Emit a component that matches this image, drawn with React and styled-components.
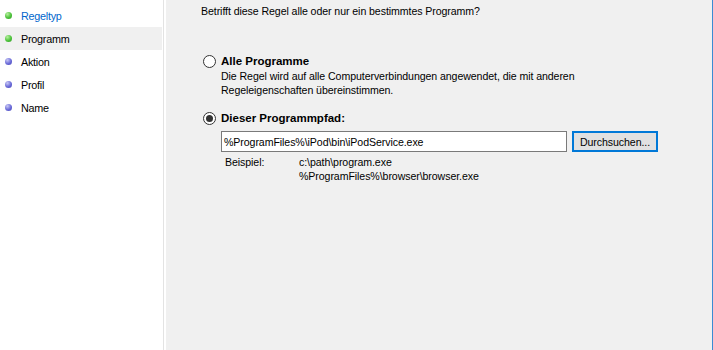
import React from "react";
import styled, { createGlobalStyle, css } from "styled-components";

const Global = createGlobalStyle`
  html, body { margin: 0; padding: 0; background: #fff; overflow: hidden; }
  * { box-sizing: border-box; }
`;

const Window = styled.div`
  display: flex;
  width: 713px;
  height: 350px;
  font-family: "Liberation Sans", Arial, sans-serif;
  font-size: 10.6px;
  letter-spacing: -0.08px;
  color: #000;
  background: #fff;
`;

const Sidebar = styled.nav`
  width: 164px;
  flex: none;
  background: #fff;
  border-right: 1px solid #e3e3e3;
  padding-top: 4px;
  padding-right: 1px;
`;

const StepRow = styled.div`
  display: flex;
  align-items: center;
  height: 23px;
  padding-left: 5px;
  gap: 9px;
  font-size: 10.8px;
  letter-spacing: -0.25px;
  background: ${(p) => (p.$selected ? "#f0f0f0" : "transparent")};
  color: ${(p) => (p.$active ? "#0066cc" : "#000")};
`;

const Bullet = styled.span`
  width: 7px;
  height: 7px;
  border-radius: 50%;
  flex: none;
  ${(p) =>
    p.$done
      ? css`background: radial-gradient(circle at 35% 30%, #b8f0a0 0%, #4cc23a 55%, #2f9a25 100%);`
      : css`background: radial-gradient(circle at 35% 30%, #c9c9f5 0%, #6a6ad8 55%, #4545b5 100%);`}
`;

const Panel = styled.main`
  flex: 1;
  margin-left: 2px;
  background: #f0f0f0;
  border-right: 1px solid #3b8bd3;
  padding: 4px 0 0 35px;
  display: flex;
  flex-direction: column;
`;

const Question = styled.div`
  line-height: 14px;
`;

const Option = styled.div`
  display: grid;
  grid-template-columns: 18px 1fr;
  margin-left: 2px;
  margin-top: ${(p) => p.$top}px;
`;

const Radio = styled.span`
  width: 13px;
  height: 13px;
  border-radius: 50%;
  border: 1px solid #333;
  background: #fff;
  display: flex;
  align-items: center;
  justify-content: center;
  margin-top: 1px;
  &::after {
    content: "";
    width: 7px;
    height: 7px;
    border-radius: 50%;
    background: ${(p) => (p.$checked ? "#333" : "transparent")};
  }
`;

const Label = styled.div`
  font-weight: bold;
  font-size: 11.5px;
  letter-spacing: 0;
  line-height: 15px;
`;

const Desc = styled.div`
  grid-column: 2;
  line-height: 14px;
`;

const PathRow = styled.div`
  grid-column: 2;
  display: flex;
  gap: 5px;
  margin-top: 5px;
`;

const PathInput = styled.div`
  width: 346px;
  height: 21px;
  border: 1px solid #7a7a7a;
  background: #fff;
  padding-left: 2px;
  display: flex;
  align-items: center;
`;

const Button = styled.div`
  width: 86px;
  height: 21px;
  border: 2px solid #0078d7;
  background: #e1e1e1;
  display: flex;
  align-items: center;
  justify-content: center;
`;

const Example = styled.div`
  grid-column: 2;
  display: grid;
  grid-template-columns: 74px 1fr;
  padding-left: 4px;
  margin-top: 3px;
  line-height: 14px;
`;

export default function App() {
  const steps = [
    { label: "Regeltyp", done: true, active: true },
    { label: "Programm", done: true, selected: true },
    { label: "Aktion" },
    { label: "Profil" },
    { label: "Name" },
  ];
  return (
    <>
      <Global />
      <Window>
        <Sidebar>
          {steps.map((s) => (
            <StepRow key={s.label} $selected={s.selected} $active={s.active}>
              <Bullet $done={s.done} />
              {s.label}
            </StepRow>
          ))}
        </Sidebar>
        <Panel>
          <Question>Betrifft diese Regel alle oder nur ein bestimmtes Programm?</Question>
          <Option $top={36}>
            <Radio />
            <Label>Alle Programme</Label>
            <Desc>
              Die Regel wird auf alle Computerverbindungen angewendet, die mit anderen
              <br />
              Regeleigenschaften übereinstimmen.
            </Desc>
          </Option>
          <Option $top={14}>
            <Radio $checked />
            <Label>Dieser Programmpfad:</Label>
            <PathRow>
              <PathInput>%ProgramFiles%\iPod\bin\iPodService.exe</PathInput>
              <Button>Durchsuchen...</Button>
            </PathRow>
            <Example>
              <span>Beispiel:</span>
              <span>
                c:\path\program.exe
                <br />
                %ProgramFiles%\browser\browser.exe
              </span>
            </Example>
          </Option>
        </Panel>
      </Window>
    </>
  );
}
